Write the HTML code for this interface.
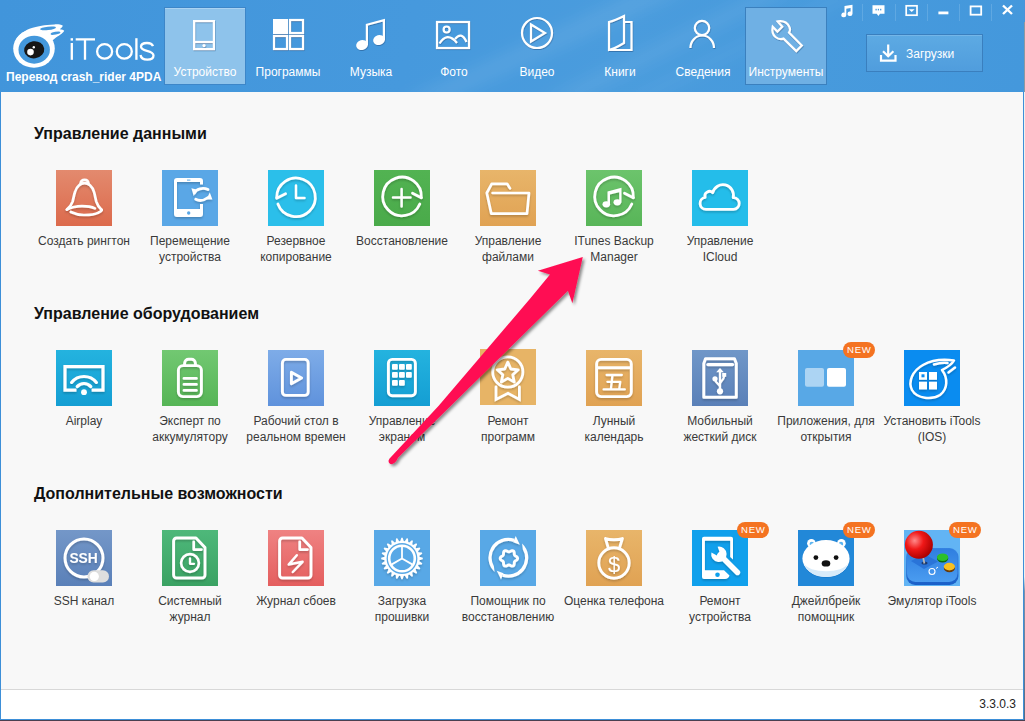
<!DOCTYPE html>
<html><head><meta charset="utf-8"><style>
*{box-sizing:border-box}
html,body{margin:0;padding:0}
body{width:1025px;height:721px;overflow:hidden;position:relative;background:linear-gradient(#f2f0ee 0%,#f2f0ee 80%,#8090a8 82%,#5a6a80 100%);font-family:"Liberation Sans",sans-serif}
#win{position:absolute;left:0;top:0;width:1024px;height:720px;background:#3d8fd8}
#hdr{position:absolute;left:0;top:0;width:1024px;height:92px;background:linear-gradient(100deg,#4195db 0%,#4699dd 40%,#4a9cdd 60%,#4498dc 100%)}
#content{position:absolute;left:1px;top:92px;width:1022px;height:597px;background:#f8f8f8}
#fline{position:absolute;left:1px;top:689px;width:1022px;height:1px;background:#d8d8d8}
#footer{position:absolute;left:1px;top:690px;width:1022px;height:29px;background:#fff}
.tab{position:absolute;top:7px;width:82px;height:78px}
.sel1{background:#8ec3eb;border:1px solid #3d86c8;box-shadow:inset 0 1px 0 #aad3f2}
.sel2{background:#6fb0e4;border:1px solid #3b80be}
.hl{position:absolute;top:64px;width:100px;text-align:center;color:#fff;font-size:12px;line-height:16px;white-space:nowrap}
.hi{position:absolute;top:0}
h2{position:absolute;margin:0;left:34px;font-size:16px;line-height:20px;font-weight:700;color:#111;white-space:nowrap}
.tile{position:absolute;width:56px;height:56px}
.tile svg{position:absolute;left:0;top:0}
.lbl{position:absolute;width:120px;text-align:center;font-size:12px;line-height:16px;color:#3a3a3a;white-space:nowrap}
.new{position:absolute;width:32px;height:16px;border-radius:8px;background:#f47321;color:#fff;font-size:9.6px;font-weight:400;line-height:15px;text-align:center;letter-spacing:0.7px;text-indent:0.7px}
.ctl{position:absolute;top:0}
.sep{position:absolute;top:5px;width:1px;height:16px;background:#5aa6e2}
#dl{position:absolute;left:866px;top:34px;width:117px;height:38px;background:linear-gradient(#5daae3,#509ddd);border:1px solid #3a7fbe;box-shadow:inset 0 1px 0 #74b6e8}
</style></head><body>
<div style="position:absolute;left:0;top:720px;width:1025px;height:1px;background:#4a4050"></div>
<div style="position:absolute;left:1024px;top:0;width:1px;height:22px;background:#4a94d8"></div>
<div style="position:absolute;left:1024px;top:22px;width:1px;height:70px;background:#9098a0"></div>
<div id="win">
<div id="hdr">
  <svg style="position:absolute;left:0;top:0" width="1024" height="92" viewBox="0 0 1024 92"><defs><filter id="bl"><feGaussianBlur stdDeviation="7"/></filter></defs>
    <g filter="url(#bl)" fill="#fff">
      <path d="M400 100 L640 -10 L690 -10 L450 100 Z" opacity="0.07"/>
      <path d="M540 100 L760 -10 L800 -10 L580 100 Z" opacity="0.06"/>
      <path d="M620 100 L840 -10 L870 -10 L650 100 Z" opacity="0.04"/>
    </g></svg>
  <svg style="position:absolute;left:0;top:0" width="70" height="72" viewBox="0 0 70 72">
    <ellipse cx="34" cy="48.6" rx="20.8" ry="19.2" fill="#fff"/>
    <path d="M15.5 40.5 C19 34 26 29.5 32.7 27.7 C38 26 44 25 54.4 24.4 C58 24.2 61 24.6 62.7 25.5 C63 26.5 61.5 28 59.7 29.2 C62 29.4 63.5 30 64.2 30.7 C63.5 32.5 60 35 56 37.5 C54 39 52 41 50 43 L34 48 Z" fill="#fff"/>
    <ellipse cx="48" cy="28.4" rx="8" ry="1.7" fill="#4498dc" transform="rotate(-6 48 28.4)"/>
    <ellipse cx="55.5" cy="33.2" rx="5" ry="1.4" fill="#4498dc" transform="rotate(-12 55.5 33.2)"/>
    <ellipse cx="34.2" cy="49.7" rx="15.7" ry="14" fill="#4498dc"/>
    <g transform="rotate(-8 34.2 49.8)"><ellipse cx="34.2" cy="49.8" rx="10.1" ry="8.6" fill="#161616"/></g>
    <circle cx="30.5" cy="52.1" r="3.3" fill="#fff"/><circle cx="33.8" cy="47.2" r="1.2" fill="#fff"/>
  </svg>
  <svg style="position:absolute;left:68px;top:34px" width="92" height="30" viewBox="0 0 92 30">
    <g stroke="#fff" stroke-width="2.3" fill="none">
      <path d="M3.8 9 V25.8"/><path d="M7.7 5.4 H27 M17 5.4 V25.8"/>
      <ellipse cx="36.6" cy="17.4" rx="7.5" ry="7.3"/><ellipse cx="56.3" cy="17.4" rx="7.5" ry="7.3"/>
      <path d="M68.4 4.2 V25.8"/>
      <path d="M85 12.2 C84 9.5 82 9 79 9 C75 9 73 10.6 73 12.8 C73 18 85.5 15.5 85.5 21.5 C85.5 24.3 83 25.6 79.3 25.6 C75.5 25.6 73 24.3 72.5 21"/>
    </g>
    <rect x="2.6" y="4.2" width="2.4" height="2.4" fill="#fff"/>
  </svg>
  <div style="position:absolute;left:6px;top:69px;font-size:12px;line-height:16px;font-weight:700;color:#fff;white-space:nowrap">Перевод crash_rider 4PDA</div>
  <div class="tab sel1" style="left:164px"></div>
  <div class="tab sel2" style="left:745px"></div>
  <svg class="hi" style="left:181px" width="50" height="60" viewBox="0 0 50 60"><defs><filter id="hs" x="-20%" y="-20%" width="140%" height="150%"><feDropShadow dx="0.5" dy="1" stdDeviation="0.6" flood-color="#1a4f80" flood-opacity="0.5"/></filter></defs><g filter="url(#hs)"><rect x="13.1" y="21.1" width="19.8" height="28" stroke="#fff" fill="none" stroke-width="2.2"/><path d="M13 42 H33" stroke="#fff" fill="none" stroke-width="2.2"/><circle cx="23" cy="45.6" r="1.6" fill="#fff"/></g></svg><svg class="hi" style="left:263px" width="50" height="60" viewBox="0 0 50 60"><defs><filter id="hs" x="-20%" y="-20%" width="140%" height="150%"><feDropShadow dx="0.5" dy="1" stdDeviation="0.6" flood-color="#1a4f80" flood-opacity="0.5"/></filter></defs><g filter="url(#hs)"><rect x="10" y="19" width="15" height="15" fill="#fff"/><rect x="27" y="20" width="13" height="13" stroke="#fff" fill="none" stroke-width="2.2"/><rect x="11" y="36" width="13" height="13" stroke="#fff" fill="none" stroke-width="2.2"/><rect x="27" y="36" width="13" height="13" stroke="#fff" fill="none" stroke-width="2.2"/></g></svg><svg class="hi" style="left:346px" width="50" height="60" viewBox="0 0 50 60"><defs><filter id="hs" x="-20%" y="-20%" width="140%" height="150%"><feDropShadow dx="0.5" dy="1" stdDeviation="0.6" flood-color="#1a4f80" flood-opacity="0.5"/></filter></defs><g filter="url(#hs)"><path d="M20.9 45 V24.8 L37.9 20.2 V40" stroke="#fff" fill="none" stroke-width="2.2" stroke-width="2.2"/><ellipse cx="16" cy="45" rx="5.9" ry="5" fill="#fff" transform="rotate(-15 16 45)"/><ellipse cx="33" cy="40" rx="5.9" ry="5" fill="#fff" transform="rotate(-15 33 40)"/></g></svg><svg class="hi" style="left:429px" width="50" height="60" viewBox="0 0 50 60"><defs><filter id="hs" x="-20%" y="-20%" width="140%" height="150%"><feDropShadow dx="0.5" dy="1" stdDeviation="0.6" flood-color="#1a4f80" flood-opacity="0.5"/></filter></defs><g filter="url(#hs)"><rect x="8" y="22" width="32" height="26" stroke="#fff" fill="none" stroke-width="2.2"/><circle cx="17.6" cy="29.5" r="3" stroke="#fff" fill="none" stroke-width="2.2" stroke-width="1.8"/><path d="M10.5 43.5 C15 36 21 34 28 43" stroke="#fff" fill="none" stroke-width="2.2" stroke-width="2"/><path d="M26 39 C30 34 34 34 37.5 42" stroke="#fff" fill="none" stroke-width="2.2" stroke-width="2"/></g></svg><svg class="hi" style="left:512px" width="50" height="60" viewBox="0 0 50 60"><defs><filter id="hs" x="-20%" y="-20%" width="140%" height="150%"><feDropShadow dx="0.5" dy="1" stdDeviation="0.6" flood-color="#1a4f80" flood-opacity="0.5"/></filter></defs><g filter="url(#hs)"><circle cx="25" cy="33" r="15" stroke="#fff" fill="none" stroke-width="2.2"/><path d="M19 24.5 L33 33 L19 41.5 Z" stroke="#fff" fill="none" stroke-width="2.2" stroke-linejoin="miter"/></g></svg><svg class="hi" style="left:595px" width="50" height="60" viewBox="0 0 50 60"><defs><filter id="hs" x="-20%" y="-20%" width="140%" height="150%"><feDropShadow dx="0.5" dy="1" stdDeviation="0.6" flood-color="#1a4f80" flood-opacity="0.5"/></filter></defs><g filter="url(#hs)"><path d="M14 50 V22 C18 21 22 19.5 29 16 V43 C24 46 19 49 14 50 Z" stroke="#fff" fill="none" stroke-width="2.2"/><path d="M29 22 H36.5 V50 H14" stroke="#fff" fill="none" stroke-width="2.2"/></g></svg><svg class="hi" style="left:678px" width="50" height="60" viewBox="0 0 50 60"><defs><filter id="hs" x="-20%" y="-20%" width="140%" height="150%"><feDropShadow dx="0.5" dy="1" stdDeviation="0.6" flood-color="#1a4f80" flood-opacity="0.5"/></filter></defs><g filter="url(#hs)"><circle cx="24" cy="28" r="7.2" stroke="#fff" fill="none" stroke-width="2.2"/><path d="M12.4 48 A11.8 12.5 0 0 1 36 48" stroke="#fff" fill="none" stroke-width="2.2"/></g></svg><svg class="hi" style="left:761px" width="50" height="60" viewBox="0 0 50 60"><defs><filter id="hs" x="-20%" y="-20%" width="140%" height="150%"><feDropShadow dx="0.5" dy="1" stdDeviation="0.6" flood-color="#1a4f80" flood-opacity="0.5"/></filter></defs><g filter="url(#hs)"><path d="M11.7 26.7 L16.4 31.6 L21.3 26.7 L16.7 21.4 C19 21 25 20 28.3 26.7 C29.5 29 29 31 28 32.5 L40.8 45.6 L35.3 51.1 L22.5 38.6 C20 39.5 17 39 14.5 37 C11.5 34.5 11 30 11.7 26.7 Z" stroke="#fff" fill="none" stroke-width="2.2" stroke-width="2" stroke-linejoin="miter"/></g></svg>
  <div class="hl" style="left:155px">Устройство</div>
  <div class="hl" style="left:238px">Программы</div>
  <div class="hl" style="left:321px">Музыка</div>
  <div class="hl" style="left:404px">Фото</div>
  <div class="hl" style="left:487px">Видео</div>
  <div class="hl" style="left:570px">Книги</div>
  <div class="hl" style="left:653px">Сведения</div>
  <div class="hl" style="left:736px">Инструменты</div>
  <!-- window controls -->
  <svg class="ctl" style="left:830px" width="194" height="26" viewBox="0 0 194 26">
    <g fill="#fff">
      <path d="M14.5 6 L22.5 4.8 V13.8 A2.5 2.3 0 1 1 20.6 11.5 V8 L16.3 8.8 V15 A2.5 2.3 0 1 1 14.5 12.7 Z"/>
      <path d="M42.5 5.3 H54.5 V13.8 H50 L48.4 16 L46.8 13.8 H42.5 Z"/>
    </g>
    <g fill="#4498dc"><rect x="45.5" y="8.8" width="1.2" height="1.6"/><rect x="47.8" y="8.8" width="1.2" height="1.6"/><rect x="50.1" y="8.8" width="1.2" height="1.6"/></g>
    <rect x="76.2" y="5.8" width="10.8" height="9.4" fill="none" stroke="#fff" stroke-width="1.7"/>
    <path d="M78.8 9.2 H84.6 L81.7 12 Z" fill="#fff"/>
    <rect x="108.4" y="11.5" width="10" height="2.8" fill="#fff"/>
    <rect x="140.6" y="6.4" width="10.6" height="8.3" fill="none" stroke="#fff" stroke-width="1.8"/>
    <path d="M173 5.5 L182 14 M182 5.5 L173 14" stroke="#fff" stroke-width="2.4"/>
    <g fill="#5fa8e2"><rect x="32" y="4" width="1" height="17"/><rect x="65" y="4" width="1" height="17"/><rect x="97" y="4" width="1" height="17"/><rect x="129" y="4" width="1" height="17"/><rect x="161" y="4" width="1" height="17"/></g>
  </svg>
  <div id="dl">
    <svg style="position:absolute;left:12px;top:8px" width="20" height="20" viewBox="0 0 20 20">
      <path d="M9.2 1.5 V13 M4 8.2 L9.2 13.2 L14.4 8.2 M2 12 V17.6 H16.5 V12" stroke="#fff" stroke-width="2.2" fill="none"/>
    </svg>
    <div style="position:absolute;left:39px;top:11px;font-size:12px;line-height:16px;color:#fff;white-space:nowrap">Загрузки</div>
  </div>
</div>
<div id="content"></div>
<div id="fline"></div>
<div id="footer"><div style="position:absolute;right:7px;top:6px;font-size:12px;line-height:16px;color:#222">3.3.0.3</div></div>
<h2 style="top:124px">Управление данными</h2>
<h2 style="top:304px">Управление оборудованием</h2>
<h2 style="top:484px">Дополнительные возможности</h2>
<div class="tile" style="left:56px;top:170px;background:linear-gradient(#e38a6e,#dc6a4c);"><svg width="56" height="56" viewBox="0 0 56 56"><defs><filter id="sh" x="-20%" y="-20%" width="140%" height="140%"><feDropShadow dx="0" dy="1.5" stdDeviation="1.2" flood-color="#000" flood-opacity="0.22"/></filter></defs><g filter="url(#sh)" stroke="#fff" fill="none" stroke-linecap="round" stroke-linejoin="round" stroke-width="2.7"><path d="M10.9 39.6 C13 37.8 15.5 35 16.6 31.6 C17.6 28 18 25 19 22 C20 18.5 21.5 16.5 23.1 15.2 C26 12.5 31 12.5 34 15.2 C35.7 16.6 37.2 19 38.2 22.5 C39 25.5 39.5 28.5 40.3 31.6 C41.3 35 43.5 38 45.7 39.9"/><path d="M24.6 13.4 C25 10.7 27 9.9 28.6 9.9 C30.2 9.9 32.2 10.7 32.5 13.4"/><path d="M10.9 39.6 C16 37 21 36.2 26 36.2 C31 36.2 36 37 38.9 38.4"/><path d="M14.8 42 C19 44 23 45 28 45 C34 45 40 44 42.6 42.6 C44.5 41.8 45.5 41 45.7 39.9"/></g></svg></div><div class="lbl" style="left:24px;top:233px">Создать рингтон</div><div class="tile" style="left:162px;top:170px;background:#5aa7e6;"><svg width="56" height="56" viewBox="0 0 56 56"><defs><filter id="sh" x="-20%" y="-20%" width="140%" height="140%"><feDropShadow dx="0" dy="1.5" stdDeviation="1.2" flood-color="#000" flood-opacity="0.22"/></filter></defs><g filter="url(#sh)"><path fill="#fff" fill-rule="evenodd" d="M15 8 H38 A3 3 0 0 1 41 11 V14.5 H38 V12 H15 V39 H38 V34 H41 V44 A3 3 0 0 1 38 47 H15 A3 3 0 0 1 12 44 V11 A3 3 0 0 1 15 8 Z"/><circle cx="26.7" cy="43" r="1.7" fill="#5aa7e6"/><rect x="25" y="9.6" width="3.4" height="1" fill="#5aa7e6"/><g stroke="#fff" fill="none" stroke-linecap="round" stroke-linejoin="round" stroke-width="2.8"><path d="M32.5 23 C34 19 41 17 46 19.6"/><path d="M33.7 29.3 C37 31 42 30.5 46 27.5"/></g><path fill="#fff" d="M29.4 18.3 L35.2 19.8 L31.7 26 Z M47.8 22.6 L50.4 29.6 L44.3 29.6 Z"/></g></svg></div><div class="lbl" style="left:130px;top:233px">Перемещение<br>устройства</div><div class="tile" style="left:268px;top:170px;background:#2bbfea;"><svg width="56" height="56" viewBox="0 0 56 56"><defs><filter id="sh" x="-20%" y="-20%" width="140%" height="140%"><feDropShadow dx="0" dy="1.5" stdDeviation="1.2" flood-color="#000" flood-opacity="0.22"/></filter></defs><g filter="url(#sh)" stroke="#fff" fill="none" stroke-linecap="round" stroke-linejoin="round" stroke-width="2.8"><path d="M9.9 34 A19.3 19.3 0 1 0 8.7 27.6"/><path d="M8.7 28.2 L17.6 23.8"/><path d="M28 15.5 V28 H36.5" stroke-width="2.5"/></g></svg></div><div class="lbl" style="left:236px;top:233px">Резервное<br>копирование</div><div class="tile" style="left:374px;top:170px;background:linear-gradient(#52b352,#4aaa4a);"><svg width="56" height="56" viewBox="0 0 56 56"><defs><filter id="sh" x="-20%" y="-20%" width="140%" height="140%"><feDropShadow dx="0" dy="1.5" stdDeviation="1.2" flood-color="#000" flood-opacity="0.22"/></filter></defs><g filter="url(#sh)" stroke="#fff" fill="none" stroke-linecap="round" stroke-linejoin="round" stroke-width="2.8"><path d="M45.8 34 A19.3 19.3 0 1 1 47.3 27.6"/><path d="M38.5 23.2 L47.3 27.8"/><path d="M19 27.6 H36.5 M27.6 19 V36.5" stroke-width="2.5"/></g></svg></div><div class="lbl" style="left:342px;top:233px">Восстановление</div><div class="tile" style="left:480px;top:170px;background:linear-gradient(#e8b56a,#e0a253);"><svg width="56" height="56" viewBox="0 0 56 56"><defs><filter id="sh" x="-20%" y="-20%" width="140%" height="140%"><feDropShadow dx="0" dy="1.5" stdDeviation="1.2" flood-color="#000" flood-opacity="0.22"/></filter></defs><g filter="url(#sh)" stroke="#fff" fill="none" stroke-linecap="round" stroke-linejoin="round" stroke-width="2.7"><path d="M12.6 23 H49 L47 43.6 H11.3 L6.8 23 L11.7 13.8 H27.1 L30 18.4"/></g></svg></div><div class="lbl" style="left:448px;top:233px">Управление<br>файлами</div><div class="tile" style="left:586px;top:170px;background:linear-gradient(#6cc46c,#58b558);"><svg width="56" height="56" viewBox="0 0 56 56"><defs><filter id="sh" x="-20%" y="-20%" width="140%" height="140%"><feDropShadow dx="0" dy="1.5" stdDeviation="1.2" flood-color="#000" flood-opacity="0.22"/></filter></defs><g filter="url(#sh)"><g stroke="#fff" fill="none" stroke-linecap="round" stroke-linejoin="round" stroke-width="2.8"><path d="M45.8 34 A19.3 19.3 0 1 1 47.3 27.6"/><path d="M38.5 23.2 L47.3 27.8"/></g><path fill="#fff" d="M21.5 21.5 L35.5 17.8 V32.5 H33.2 V22.2 L24 24.6 V34 H21.5 Z"/><ellipse cx="20.3" cy="34.3" rx="3.8" ry="3.1" fill="#fff"/><ellipse cx="31.3" cy="32.3" rx="3.8" ry="3.1" fill="#fff"/></g></svg></div><div class="lbl" style="left:554px;top:233px">ITunes Backup<br>Manager</div><div class="tile" style="left:692px;top:170px;background:#24bdea;"><svg width="56" height="56" viewBox="0 0 56 56"><defs><filter id="sh" x="-20%" y="-20%" width="140%" height="140%"><feDropShadow dx="0" dy="1.5" stdDeviation="1.2" flood-color="#000" flood-opacity="0.22"/></filter></defs><g filter="url(#sh)" stroke="#fff" fill="none" stroke-linecap="round" stroke-linejoin="round" stroke-width="2.8"><path d="M15 39.4 H41.5 A5.9 5.9 0 0 0 41.2 27.6 A10.5 10.5 0 0 0 20.75 22.75 A4.6 4.6 0 0 0 13.15 27.47 A6 6 0 0 0 14 39.4 Z"/></g></svg></div><div class="lbl" style="left:660px;top:233px">Управление<br>ICloud</div><div class="tile" style="left:56px;top:350px;background:linear-gradient(#24b3df,#149ed3);"><svg width="56" height="56" viewBox="0 0 56 56"><defs><filter id="sh" x="-20%" y="-20%" width="140%" height="140%"><feDropShadow dx="0" dy="1.5" stdDeviation="1.2" flood-color="#000" flood-opacity="0.22"/></filter></defs><g filter="url(#sh)" stroke="#fff" fill="none" stroke-linecap="round" stroke-linejoin="round" stroke-width="3.2"><path d="M20.5 40.1 H9 V16.7 H47 V40.1 H35.6" stroke-linecap="butt" stroke-linejoin="miter"/><path d="M15.6 32.4 A16 16 0 0 1 40.4 32.4"/><path d="M21.2 36.6 A9 9 0 0 1 34.8 36.6"/></g><circle cx="28" cy="42.2" r="2.9" fill="#fff"/></svg></div><div class="lbl" style="left:24px;top:413px">Airplay</div><div class="tile" style="left:162px;top:350px;background:linear-gradient(#72c872,#56b556);"><svg width="56" height="56" viewBox="0 0 56 56"><defs><filter id="sh" x="-20%" y="-20%" width="140%" height="140%"><feDropShadow dx="0" dy="1.5" stdDeviation="1.2" flood-color="#000" flood-opacity="0.22"/></filter></defs><g filter="url(#sh)" stroke="#fff" fill="none" stroke-linecap="round" stroke-linejoin="round" stroke-width="2.9"><rect x="16.4" y="15.6" width="23" height="31" rx="4.5"/><path d="M22.6 15 V13 A4 4 0 0 1 26.6 9.3 H29.4 A4 4 0 0 1 33.4 13 V15"/><path d="M22 28.4 H34.4 M22 34.4 H34.4 M22 40.4 H34.4"/></g></svg></div><div class="lbl" style="left:130px;top:413px">Эксперт по<br>аккумулятору</div><div class="tile" style="left:268px;top:350px;background:linear-gradient(#7eace8,#5f92dc);"><svg width="56" height="56" viewBox="0 0 56 56"><defs><filter id="sh" x="-20%" y="-20%" width="140%" height="140%"><feDropShadow dx="0" dy="1.5" stdDeviation="1.2" flood-color="#000" flood-opacity="0.22"/></filter></defs><g filter="url(#sh)" stroke="#fff" fill="none" stroke-linecap="round" stroke-linejoin="round" stroke-width="2.9"><rect x="14.4" y="9.4" width="25.8" height="36" rx="3.5"/><path d="M23.4 22.2 L33.6 28 L23.4 33.8 Z"/></g></svg></div><div class="lbl" style="left:236px;top:413px">Рабочий стол в<br>реальном времен</div><div class="tile" style="left:374px;top:350px;background:linear-gradient(#24b3df,#149ed3);"><svg width="56" height="56" viewBox="0 0 56 56"><defs><filter id="sh" x="-20%" y="-20%" width="140%" height="140%"><feDropShadow dx="0" dy="1.5" stdDeviation="1.2" flood-color="#000" flood-opacity="0.22"/></filter></defs><g filter="url(#sh)"><rect x="14.4" y="9.4" width="27" height="36.3" rx="3.8" stroke="#fff" fill="none" stroke-linecap="round" stroke-linejoin="round" stroke-width="2.9"/><rect x="18" y="13.9" width="5.8" height="5.8" rx="1" fill="#fff"/><rect x="25" y="13.9" width="5.8" height="5.8" rx="1" fill="#fff"/><rect x="32" y="13.9" width="5.8" height="5.8" rx="1" fill="#fff"/><rect x="18" y="21.9" width="5.8" height="5.8" rx="1" fill="#fff"/><rect x="25" y="21.9" width="5.8" height="5.8" rx="1" fill="#fff"/><rect x="32" y="21.9" width="5.8" height="5.8" rx="1" fill="#fff"/><rect x="18" y="30" width="5.8" height="5.8" rx="1" fill="#fff"/><rect x="25" y="30" width="5.8" height="5.8" rx="1" fill="#fff"/></g></svg></div><div class="lbl" style="left:342px;top:413px">Управление<br>экраном</div><div class="tile" style="left:480px;top:349px;background:#e7b466;"><svg width="56" height="56" viewBox="0 0 56 56"><defs><filter id="sh" x="-20%" y="-20%" width="140%" height="140%"><feDropShadow dx="0" dy="1.5" stdDeviation="1.2" flood-color="#000" flood-opacity="0.22"/></filter></defs><g filter="url(#sh)" stroke="#fff" fill="none" stroke-linecap="round" stroke-linejoin="round" stroke-width="2.8"><circle cx="27.8" cy="23" r="15.1"/><polygon points="27.80,13.20 30.86,19.99 38.26,20.80 32.75,25.81 34.27,33.10 27.80,29.40 21.33,33.10 22.85,25.81 17.34,20.80 24.74,19.99"/><path d="M16 38 V50.5 L28 44.3 L39.4 50.5 V38" stroke-linejoin="miter"/></g></svg></div><div class="lbl" style="left:448px;top:413px">Ремонт<br>программ</div><div class="tile" style="left:586px;top:350px;background:linear-gradient(#e8b56a,#e0a253);"><svg width="56" height="56" viewBox="0 0 56 56"><defs><filter id="sh" x="-20%" y="-20%" width="140%" height="140%"><feDropShadow dx="0" dy="1.5" stdDeviation="1.2" flood-color="#000" flood-opacity="0.22"/></filter></defs><g filter="url(#sh)" stroke="#fff" fill="none" stroke-linecap="round" stroke-linejoin="round" stroke-width="2.9"><rect x="10.6" y="9.4" width="34.7" height="37.2" rx="4.5"/><path d="M10.6 17.7 H45.3" stroke-linecap="butt"/><path d="M20.6 25 H35.8 M26.5 25 L24.9 39.2 M21.4 31.8 H34.3 L33.2 39.2 M17.6 39.4 H38.8" stroke-width="2.3"/></g></svg></div><div class="lbl" style="left:554px;top:413px">Лунный<br>календарь</div><div class="tile" style="left:692px;top:350px;background:linear-gradient(#7097c8,#5a80b8);"><svg width="56" height="56" viewBox="0 0 56 56"><defs><filter id="sh" x="-20%" y="-20%" width="140%" height="140%"><feDropShadow dx="0" dy="1.5" stdDeviation="1.2" flood-color="#000" flood-opacity="0.22"/></filter></defs><g filter="url(#sh)"><path d="M13.5 8.7 H42.5 L44.3 13.5 V47.3 H11.8 V13.5 Z" stroke="#fff" fill="none" stroke-linecap="round" stroke-linejoin="round" stroke-width="3"/><path d="M16 14.6 H40.5" stroke="#fff" fill="none" stroke-linecap="round" stroke-linejoin="round" stroke-width="3.4"/><path d="M28 21 V40" stroke="#fff" fill="none" stroke-linecap="round" stroke-linejoin="round" stroke-width="2.3"/><path fill="#fff" d="M24.2 22.3 L28 18 L31.8 22.3 Z"/><circle cx="23" cy="28.8" r="2.6" fill="#fff"/><rect x="30.2" y="23" width="4" height="3.8" fill="#fff"/><path d="M23 29 C23 33 27.5 34 28 36.5 M32.2 25.5 C32.2 30 28.5 31 28 33.5" stroke="#fff" fill="none" stroke-linecap="round" stroke-linejoin="round" stroke-width="2.2"/><circle cx="28" cy="41.3" r="3.1" fill="#fff"/></g></svg></div><div class="lbl" style="left:660px;top:413px">Мобильный<br>жесткий диск</div><div class="tile" style="left:798px;top:350px;background:#58a8e6;"><svg width="56" height="56" viewBox="0 0 56 56"><defs><filter id="sh" x="-20%" y="-20%" width="140%" height="140%"><feDropShadow dx="0" dy="1.5" stdDeviation="1.2" flood-color="#000" flood-opacity="0.22"/></filter></defs><rect x="7" y="18" width="19" height="18.8" rx="2" fill="#fff" fill-opacity="0.5"/><rect x="29" y="18" width="19" height="18.8" rx="2" fill="#fff"/></svg></div><div class="new" style="left:843px;top:342px">NEW</div><div class="lbl" style="left:766px;top:413px">Приложения, для<br>открытия</div><div class="tile" style="left:904px;top:350px;background:#0a8cf0;"><svg width="56" height="56" viewBox="0 0 56 56"><defs><filter id="sh" x="-20%" y="-20%" width="140%" height="140%"><feDropShadow dx="0" dy="1.5" stdDeviation="1.2" flood-color="#000" flood-opacity="0.22"/></filter></defs><g filter="url(#sh)"><g stroke="#fff" fill="none" stroke-linecap="round" stroke-linejoin="round" stroke-width="2.5"><path d="M50 10.5 C40 9 28 10 19 15 C8 21 4 32 8 40 C13 49 28 50 36 45 C44 39 44 28 38 20 C44 17 48 14 50 10.5 Z M30 14.5 C35 13 40 12.5 43.5 13"/><path d="M44.5 22.5 L51 17.5"/></g><rect x="15" y="22" width="8" height="7.8" fill="#fff"/><rect x="25" y="22" width="8" height="7.8" fill="#fff"/><rect x="15" y="31.7" width="8" height="7.8" fill="#fff"/><rect x="25" y="31.7" width="8" height="7.8" fill="#fff"/><rect x="17.5" y="24.3" width="3" height="3" fill="#0a8cf0"/></g></svg></div><div class="lbl" style="left:872px;top:413px">Установить iTools<br>(IOS)</div><div class="tile" style="left:56px;top:530px;background:linear-gradient(#7497c8,#5a80b8);"><svg width="56" height="56" viewBox="0 0 56 56"><defs><filter id="sh" x="-20%" y="-20%" width="140%" height="140%"><feDropShadow dx="0" dy="1.5" stdDeviation="1.2" flood-color="#000" flood-opacity="0.22"/></filter></defs><g filter="url(#sh)"><circle cx="28" cy="28" r="19" stroke="#fff" fill="none" stroke-linecap="round" stroke-linejoin="round" stroke-width="3"/><text x="27.6" y="32.6" text-anchor="middle" font-family="Liberation Sans" font-weight="700" font-size="13.8" fill="#fff">SSH</text></g><rect x="31.5" y="40.3" width="21.5" height="12.2" rx="6.1" fill="#dedede"/><circle cx="38.3" cy="46.4" r="4.6" fill="#fff"/></svg></div><div class="lbl" style="left:24px;top:593px">SSH канал</div><div class="tile" style="left:162px;top:530px;background:linear-gradient(#4eb87a,#3aa263);"><svg width="56" height="56" viewBox="0 0 56 56"><defs><filter id="sh" x="-20%" y="-20%" width="140%" height="140%"><feDropShadow dx="0" dy="1.5" stdDeviation="1.2" flood-color="#000" flood-opacity="0.22"/></filter></defs><g filter="url(#sh)" stroke="#fff" fill="none" stroke-linecap="round" stroke-linejoin="round" stroke-width="2.9"><path d="M14.6 8 H34 L43 17.5 V45 A3 3 0 0 1 40 48 H14.6 A3 3 0 0 1 11.6 45 V11 A3 3 0 0 1 14.6 8 Z"/><path d="M31.7 11.8 V19.6 H39.5" stroke-width="2.7"/><circle cx="28" cy="33" r="8.9" stroke-width="2.6"/><path d="M28 28.5 V33.8 H32" stroke-width="2.3"/></g></svg></div><div class="lbl" style="left:130px;top:593px">Системный<br>журнал</div><div class="tile" style="left:268px;top:530px;background:linear-gradient(#ef8282,#e45e5e);"><svg width="56" height="56" viewBox="0 0 56 56"><defs><filter id="sh" x="-20%" y="-20%" width="140%" height="140%"><feDropShadow dx="0" dy="1.5" stdDeviation="1.2" flood-color="#000" flood-opacity="0.22"/></filter></defs><g filter="url(#sh)" stroke="#fff" fill="none" stroke-linecap="round" stroke-linejoin="round" stroke-width="2.9"><path d="M14.6 8 H34 L43 17.5 V45 A3 3 0 0 1 40 48 H14.6 A3 3 0 0 1 11.6 45 V11 A3 3 0 0 1 14.6 8 Z"/><path d="M31.7 11.8 V19.6 H39.5" stroke-width="2.7"/><path d="M28.8 25.2 L20.7 34.6 L34.6 31.8 L24.8 42" stroke-width="2.5"/></g></svg></div><div class="lbl" style="left:236px;top:593px">Журнал сбоев</div><div class="tile" style="left:374px;top:530px;background:#58a8e6;"><svg width="56" height="56" viewBox="0 0 56 56"><defs><filter id="sh" x="-20%" y="-20%" width="140%" height="140%"><feDropShadow dx="0" dy="1.5" stdDeviation="1.2" flood-color="#000" flood-opacity="0.22"/></filter></defs><g filter="url(#sh)"><polygon points="27.35,7.71 28.65,7.71 29.75,10.99 30.84,11.13 32.75,8.25 34.01,8.59 34.22,12.04 35.24,12.46 37.83,10.17 38.96,10.82 38.27,14.21 39.15,14.88 42.24,13.34 43.16,14.26 41.62,17.35 42.29,18.23 45.68,17.54 46.33,18.67 44.04,21.26 44.46,22.28 47.91,22.49 48.25,23.75 45.37,25.66 45.51,26.75 48.79,27.85 48.79,29.15 45.51,30.25 45.37,31.34 48.25,33.25 47.91,34.51 44.46,34.72 44.04,35.74 46.33,38.33 45.68,39.46 42.29,38.77 41.62,39.65 43.16,42.74 42.24,43.66 39.15,42.12 38.27,42.79 38.96,46.18 37.83,46.83 35.24,44.54 34.22,44.96 34.01,48.41 32.75,48.75 30.84,45.87 29.75,46.01 28.65,49.29 27.35,49.29 26.25,46.01 25.16,45.87 23.25,48.75 21.99,48.41 21.78,44.96 20.76,44.54 18.17,46.83 17.04,46.18 17.73,42.79 16.85,42.12 13.76,43.66 12.84,42.74 14.38,39.65 13.71,38.77 10.32,39.46 9.67,38.33 11.96,35.74 11.54,34.72 8.09,34.51 7.75,33.25 10.63,31.34 10.49,30.25 7.21,29.15 7.21,27.85 10.49,26.75 10.63,25.66 7.75,23.75 8.09,22.49 11.54,22.28 11.96,21.26 9.67,18.67 10.32,17.54 13.71,18.23 14.38,17.35 12.84,14.26 13.76,13.34 16.85,14.88 17.73,14.21 17.04,10.82 18.17,10.17 20.76,12.46 21.78,12.04 21.99,8.59 23.25,8.25 25.16,11.13 26.25,10.99" fill="#fff"/><circle cx="28" cy="28.5" r="15.4" fill="#58a8e6"/><circle cx="28" cy="28.5" r="12.8" fill="none" stroke="#fff" stroke-width="2.6"/><path d="M28 28.5 V16.5 M28 28.5 L17.8 34.4 M28 28.5 L38.2 34.4" stroke="#fff" stroke-width="1.8"/></g></svg></div><div class="lbl" style="left:342px;top:593px">Загрузка<br>прошивки</div><div class="tile" style="left:480px;top:530px;background:#58a8e6;"><svg width="56" height="56" viewBox="0 0 56 56"><defs><filter id="sh" x="-20%" y="-20%" width="140%" height="140%"><feDropShadow dx="0" dy="1.5" stdDeviation="1.2" flood-color="#000" flood-opacity="0.22"/></filter></defs><g filter="url(#sh)"><g fill="#fff" id="rc"><path d="M14.6 42.04 A19.8 19.8 0 0 1 34.5 8.87 L33.51 11.92 A16.7 16.7 0 0 0 13.89 36.15 Z"/><path d="M35.7 6.1 L39.9 14.8 L33.2 12.3 Z"/></g><g fill="#fff" transform="rotate(180 28.35 27.8)"><path d="M14.6 42.04 A19.8 19.8 0 0 1 34.5 8.87 L33.51 11.92 A16.7 16.7 0 0 0 13.89 36.15 Z"/><path d="M35.7 6.1 L39.9 14.8 L33.2 12.3 Z"/></g><path d="M37.60,28.40 L37.42,29.15 L36.93,29.82 L36.24,30.37 L35.52,30.81 L34.92,31.21 L34.53,31.65 L34.35,32.21 L34.30,32.93 L34.27,33.77 L34.14,34.64 L33.81,35.41 L33.25,35.93 L32.51,36.15 L31.69,36.06 L30.87,35.74 L30.12,35.34 L29.48,35.02 L28.90,34.90 L28.32,35.02 L27.68,35.34 L26.93,35.74 L26.11,36.06 L25.29,36.15 L24.55,35.93 L23.99,35.41 L23.66,34.64 L23.53,33.77 L23.50,32.93 L23.45,32.21 L23.27,31.65 L22.88,31.21 L22.28,30.81 L21.56,30.37 L20.87,29.82 L20.38,29.15 L20.20,28.40 L20.38,27.65 L20.87,26.98 L21.56,26.43 L22.28,25.99 L22.88,25.59 L23.27,25.15 L23.45,24.59 L23.50,23.87 L23.53,23.03 L23.66,22.16 L23.99,21.39 L24.55,20.87 L25.29,20.65 L26.11,20.74 L26.93,21.06 L27.68,21.46 L28.32,21.78 L28.90,21.90 L29.48,21.78 L30.12,21.46 L30.87,21.06 L31.69,20.74 L32.51,20.65 L33.25,20.87 L33.81,21.39 L34.14,22.16 L34.27,23.03 L34.30,23.87 L34.35,24.59 L34.53,25.15 L34.92,25.59 L35.52,25.99 L36.24,26.43 L36.93,26.98 L37.42,27.65 L37.60,28.40Z" stroke="#fff" fill="none" stroke-linecap="round" stroke-linejoin="round" stroke-width="2.9"/></g></svg></div><div class="lbl" style="left:448px;top:593px">Помощник по<br>восстановлению</div><div class="tile" style="left:586px;top:530px;background:linear-gradient(#e8b56a,#e0a253);"><svg width="56" height="56" viewBox="0 0 56 56"><defs><filter id="sh" x="-20%" y="-20%" width="140%" height="140%"><feDropShadow dx="0" dy="1.5" stdDeviation="1.2" flood-color="#000" flood-opacity="0.22"/></filter></defs><g filter="url(#sh)" stroke="#fff" fill="none" stroke-linecap="round" stroke-linejoin="round" stroke-width="2.9"><circle cx="28" cy="33" r="15.2"/><path d="M19.5 8.6 C24 10.2 32 10.2 36.4 8.6 L33.6 17.6 M19.5 8.6 L22.2 17.6" /><text x="28" y="41.5" text-anchor="middle" font-family="Liberation Sans" font-size="22" fill="#fff" stroke="none" font-weight="400">$</text></g></svg></div><div class="lbl" style="left:554px;top:593px">Оценка телефона</div><div class="tile" style="left:692px;top:530px;background:#10a0ec;"><svg width="56" height="56" viewBox="0 0 56 56"><defs><filter id="sh" x="-20%" y="-20%" width="140%" height="140%"><feDropShadow dx="0" dy="1.5" stdDeviation="1.2" flood-color="#000" flood-opacity="0.22"/></filter></defs><g filter="url(#sh)"><path fill="#fff" fill-rule="evenodd" d="M12 6.8 H39 A2 2 0 0 1 41 8.8 V29.5 L38.2 27 V10.7 H12.9 V40.3 H32 L37.5 45.5 A5 5 0 0 1 33 49 H12 A2 2 0 0 1 10 47 V8.8 A2 2 0 0 1 12 6.8 Z"/><circle cx="25.5" cy="44.7" r="2.3" fill="#10a0ec"/><path d="M28 25 L45.5 42.5" stroke="#fff" stroke-width="5.4" stroke-linecap="round"/><path fill="#fff" d="M19.4 22.5 L24.9 25.6 L27.4 21.5 L25.6 16.7 A7.7 7.7 0 1 1 19.4 22.5 Z"/></g></svg></div><div class="new" style="left:737px;top:522px">NEW</div><div class="lbl" style="left:660px;top:593px">Ремонт<br>устройства</div><div class="tile" style="left:798px;top:530px;background:#2288d8;"><svg width="56" height="56" viewBox="0 0 56 56"><defs><filter id="sh" x="-20%" y="-20%" width="140%" height="140%"><feDropShadow dx="0" dy="1.5" stdDeviation="1.2" flood-color="#000" flood-opacity="0.22"/></filter></defs><ellipse cx="28" cy="29" rx="23.5" ry="19" fill="#1070c8" opacity="0.5"/><circle cx="13.4" cy="13.3" r="4.3" fill="#fff"/><circle cx="13.8" cy="13.9" r="2.2" fill="#5ab4f0"/><circle cx="43.4" cy="13.3" r="4.3" fill="#fff"/><circle cx="43" cy="13.9" r="2.2" fill="#5ab4f0"/><ellipse cx="28" cy="28.5" rx="23.6" ry="18.5" fill="#fff"/><path d="M6 33 C10 44 46 44 50 33 C47 43 38 47 28 47 C18 47 9 43 6 33Z" fill="#d8ebfa"/><circle cx="17.9" cy="27.6" r="2.4" fill="#111"/><circle cx="38.1" cy="27.6" r="2.4" fill="#111"/><ellipse cx="28" cy="33.4" rx="4.3" ry="3.2" fill="#111"/></svg></div><div class="new" style="left:843px;top:522px">NEW</div><div class="lbl" style="left:766px;top:593px">Джейлбрейк<br>помощник</div><div class="tile" style="left:904px;top:530px;background:#62b4f4;"><svg width="56" height="56" viewBox="0 0 56 56"><defs><filter id="sh" x="-20%" y="-20%" width="140%" height="140%"><feDropShadow dx="0" dy="1.5" stdDeviation="1.2" flood-color="#000" flood-opacity="0.22"/></filter></defs><defs><radialGradient id="rb" cx="0.35" cy="0.35" r="0.7"><stop offset="0" stop-color="#ff8a8a"/><stop offset="0.45" stop-color="#f01818"/><stop offset="1" stop-color="#a80000"/></radialGradient><linearGradient id="pad" x1="0" y1="0" x2="0" y2="1"><stop offset="0" stop-color="#3a88e4"/><stop offset="1" stop-color="#1a5fc8"/></linearGradient><linearGradient id="pad2" x1="0" y1="0" x2="0" y2="1"><stop offset="0" stop-color="#2f7ee0"/><stop offset="1" stop-color="#4a9cf0"/></linearGradient></defs><rect x="2.2" y="18" width="52.3" height="37" rx="9" fill="url(#pad)"/><rect x="3" y="18.5" width="50.5" height="33.5" rx="8.5" fill="url(#pad2)"/><path d="M7 31 L20 24 L34 31.5 L20 39Z" fill="#2a74d8"/><ellipse cx="38.6" cy="28.4" rx="5.6" ry="4" fill="#0a6a10"/><ellipse cx="38.6" cy="27.2" rx="5.6" ry="3.8" fill="#2cc02c"/><ellipse cx="45.4" cy="38" rx="5.6" ry="4.3" fill="#6a3a08"/><ellipse cx="45.4" cy="36.6" rx="5.6" ry="3.8" fill="#f8c020"/><circle cx="28" cy="41.5" r="3" stroke="#fff" stroke-width="1.1" fill="none"/><path d="M32 38.5 L34 37" stroke="#fff" stroke-width="1"/><ellipse cx="20.5" cy="33" rx="3" ry="1.6" fill="#1a3a70"/><rect x="19.4" y="26" width="1.8" height="7.5" fill="#b8b8b8" transform="rotate(-12 20.3 33)"/><circle cx="14.9" cy="14.8" r="14" fill="url(#rb)"/></svg></div><div class="new" style="left:949px;top:522px">NEW</div><div class="lbl" style="left:872px;top:593px">Эмулятор iTools</div>
<svg style="position:absolute;left:0;top:0" width="1024" height="720" viewBox="0 0 1024 720">
  <defs><filter id="ash" x="-20%" y="-20%" width="140%" height="140%"><feDropShadow dx="2" dy="2" stdDeviation="1.6" flood-color="#000" flood-opacity="0.45"/></filter></defs>
  <path filter="url(#ash)" fill="#ff1053" d="M550 274.5 L537.9 270.8 L582.8 257.1 L572.4 303.2 L567.9 290.8 L398 457.8 C396.5 462 392.5 465.5 389.7 463.6 C387.8 462 388.5 459.5 390.3 457.8 L438.7 405.8 L530 298.7 Z"/>
</svg>
</div>
</body></html>
